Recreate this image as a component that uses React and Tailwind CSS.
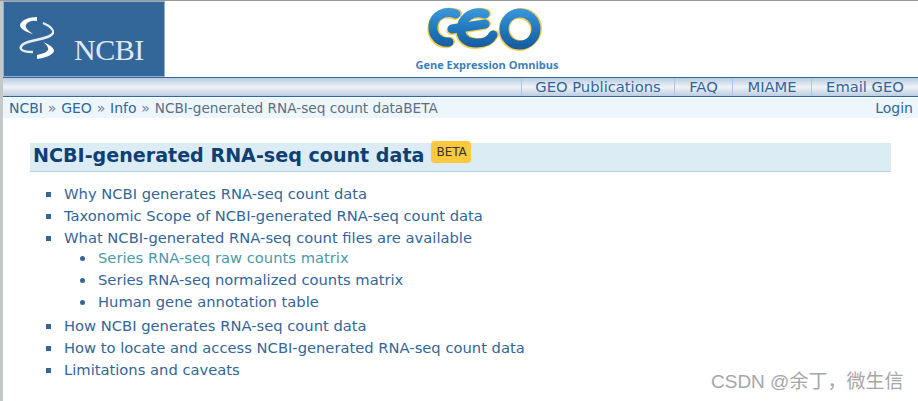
const F = { fontFamily: '"DejaVu Sans", Verdana, sans-serif' };

function NcbiLogo() {
  return (
    <div className="w-[162px] h-[76px] bg-[#336699] border border-[#8fb0cf] flex items-start shrink-0">
      <svg width="42" height="48" viewBox="16 14 42 48" className="mt-[12px] ml-[12px] shrink-0" fill="none">
        <path d="M37 17 C29 17 21 20 20 25 C20 29 26 32 33 34 C27 30 25 27 26 25 C27 22 32 20 37 21 Z" fill="#ffffff" />
        <path d="M43 23 C50 26 54 29 53 33 C51 38 38 39 28 42 C22 44 20 46 21 49 C22 51 27 52 33 52" stroke="#e6edf5" strokeWidth="2.4" />
        <path d="M37 59 C45 58 53 55 54 51 C54 47 48 44 43 42 C47 45 49 48 48 50 C46 53 41 54 37 55 Z" fill="#ffffff" />
      </svg>
      <span className="text-[30px] leading-none text-[#dfe8f2] mt-[33px] ml-[16px] tracking-[-0.5px]" style={{ fontFamily: '"Liberation Serif", serif' }}>NCBI</span>
    </div>
  );
}

const GEO_PATHS = (
  <>
    <path d="M31 9 C20 5 9 10 8 21 C7 32 16 38 24 37" />
    <path d="M60 9 C48 5 38 12 36 23 C35 33 42 38 52 38 C60 38 65 36 68 30" />
    <path d="M27 24 L60 19" />
    <circle cx="95" cy="24" r="16" />
  </>
);

function GeoLogo() {
  return (
    <div className="flex flex-col items-center w-[150px]">
      <svg width="125" height="55" viewBox="0 0 125 55" fill="none" className="mt-[4px]">
        <defs>
          <linearGradient id="geoBlue" gradientUnits="userSpaceOnUse" x1="0" y1="4" x2="0" y2="44">
            <stop offset="0" stopColor="#3a97dc" />
            <stop offset="0.55" stopColor="#1f74bb" />
            <stop offset="1" stopColor="#165a9c" />
          </linearGradient>
        </defs>
        <g stroke="#f6cd4e" strokeWidth="9" strokeLinecap="round" transform="translate(1.5 -0.5)">{GEO_PATHS}</g>
        <g stroke="#f6cd4e" strokeWidth="9" strokeLinecap="round" transform="translate(-1 1.5)">{GEO_PATHS}</g>
        <g stroke="url(#geoBlue)" strokeWidth="9" strokeLinecap="round">{GEO_PATHS}</g>
      </svg>
      <div className="text-[11px] leading-[14px] font-bold text-[#3b7fb8] mt-[-2px] whitespace-nowrap" style={{ fontFamily: '"Open Sans", sans-serif' }}>Gene Expression Omnibus</div>
    </div>
  );
}

function NavItem({ children, w }) {
  return <div className={`h-full pt-px flex items-center justify-center border-l border-[#a9c6ea] ${w}`}>{children}</div>;
}

function Item({ children, cls = "text-[#336699]", bullet = "square" }) {
  return (
    <li className={`h-[22px] leading-[22px] flex items-center whitespace-nowrap ${cls}`}>
      <span className={bullet === "square" ? "w-[5px] h-[5px] mr-[13px] bg-[#336699] shrink-0" : "w-[5px] h-[5px] mr-[13px] rounded-full bg-[#336699] shrink-0"} />
      {children}
    </li>
  );
}

export default function App() {
  return (
    <div className="w-[918px] h-[401px] bg-white relative overflow-hidden text-[14.72px]" style={F}>
      <div className="h-[1px] bg-[#999999]" />
      <div className="flex h-[400px]">
        <div className="w-[3px] bg-[#c3c8c8] shrink-0" />
        <div className="grow">
          <div className="flex h-[76px]">
            <NcbiLogo />
            <div className="w-[247px]" />
            <GeoLogo />
          </div>
          <div className="h-[20px] border-y border-[#336699] bg-gradient-to-b from-[#b9cbe0] via-[#eef3f8] to-[#bccde1] flex justify-end items-center text-[#336699]">
            <NavItem w="w-[153px]">GEO Publications</NavItem>
            <NavItem w="w-[58px]">FAQ</NavItem>
            <NavItem w="w-[79px]">MIAME</NavItem>
            <NavItem w="w-[107px]">Email GEO</NavItem>
          </div>
          <div className="h-[20px] mt-[1px] bg-[#edf6fd] flex items-center justify-between pl-[6px] pr-[5px] text-[14px] text-[#336699]">
            <div className="whitespace-nowrap">
              NCBI <span className="text-[#6b7f99] mx-[0.35px]">»</span> GEO <span className="text-[#6b7f99] mx-[0.35px]">»</span> Info <span className="text-[#6b7f99] mx-[0.35px]">»</span> <span className="text-[#5c6f80] text-[13.65px]">NCBI-generated RNA-seq count dataBETA</span>
            </div>
            <div>Login</div>
          </div>

          <div className="ml-[27px] mr-[27px] mt-[25px] h-[29px] bg-[#dcecf4] border-b border-[#b5cfe3] flex items-start pl-[3px]">
            <h1 className="text-[19.1px] leading-[26px] font-bold text-[#0f3f73] whitespace-nowrap">NCBI-generated RNA-seq count data</h1>
            <span className="ml-[7px] mt-[-2px] h-[22px] pl-[5px] pr-[4px] rounded-[4px] bg-[#fcc83e] text-[#333333] text-[12px] leading-[22px]">BETA</span>
          </div>

          <ul className="mt-[11px] ml-[43px] list-none">
            <Item>Why NCBI generates RNA-seq count data</Item>
            <Item>Taxonomic Scope of NCBI-generated RNA-seq count data</Item>
            <Item>What NCBI-generated RNA-seq count files are available</Item>
            <li>
              <ul className="ml-[34px] mt-[-2px] mb-[2px] list-none">
                <Item bullet="disc" cls="text-[#4c9aa8]">Series RNA-seq raw counts matrix</Item>
                <Item bullet="disc">Series RNA-seq normalized counts matrix</Item>
                <Item bullet="disc">Human gene annotation table</Item>
              </ul>
            </li>
            <Item>How NCBI generates RNA-seq count data</Item>
            <Item>How to locate and access NCBI-generated RNA-seq count data</Item>
            <Item>Limitations and caveats</Item>
          </ul>
        </div>
      </div>

      <div className="absolute left-[711px] top-[371px] text-[19px] leading-[22px] text-[#a6a6a6] whitespace-nowrap" style={{ fontFamily: '"Liberation Sans", "Noto Sans CJK SC", sans-serif' }}>CSDN @余丁，微生信</div>
    </div>
  );
}
